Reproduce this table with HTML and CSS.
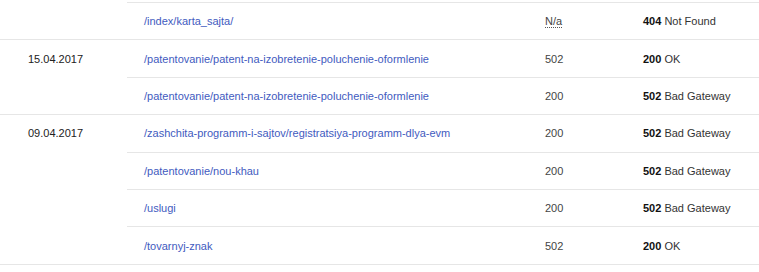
FILE: index.html
```html
<!DOCTYPE html>
<html>
<head>
<meta charset="utf-8">
<link rel="stylesheet" href="styles.css">
</head>
<body>
<div class="table">
  <div class="group first">
    <div class="date"></div>
    <div class="rows">
      <div class="row"><a class="url">/index/karta_sajta/</a><span class="code"><abbr class="na">N/a</abbr></span><span class="status"><b>404</b> Not Found</span></div>
    </div>
  </div>
  <div class="group">
    <div class="date">15.04.2017</div>
    <div class="rows">
      <div class="row"><a class="url">/patentovanie/patent-na-izobretenie-poluchenie-oformlenie</a><span class="code">502</span><span class="status"><b>200</b> OK</span></div>
      <div class="row"><a class="url">/patentovanie/patent-na-izobretenie-poluchenie-oformlenie</a><span class="code">200</span><span class="status"><b>502</b> Bad Gateway</span></div>
    </div>
  </div>
  <div class="group">
    <div class="date">09.04.2017</div>
    <div class="rows">
      <div class="row"><a class="url">/zashchita-programm-i-sajtov/registratsiya-programm-dlya-evm</a><span class="code">200</span><span class="status"><b>502</b> Bad Gateway</span></div>
      <div class="row"><a class="url">/patentovanie/nou-khau</a><span class="code">200</span><span class="status"><b>502</b> Bad Gateway</span></div>
      <div class="row"><a class="url">/uslugi</a><span class="code">200</span><span class="status"><b>502</b> Bad Gateway</span></div>
      <div class="row"><a class="url">/tovarnyj-znak</a><span class="code">502</span><span class="status"><b>200</b> OK</span></div>
    </div>
  </div>
</div>
</body>
</html>
```
FILE: styles.css
```css
html, body {
  margin: 0;
  padding: 0;
  background: #ffffff;
}
body {
  font-family: "Liberation Sans", Arial, sans-serif;
  font-size: 11px;
  color: #333333;
}
.table {
  margin-top: 2px;
  border-bottom: 1px solid #e6e6e6;
}
.group {
  display: flex;
  border-top: 1px solid #e6e6e6;
}
.group.first {
  border-top: none;
}
.date {
  flex: 0 0 127px;
  box-sizing: border-box;
  padding-left: 28px;
  height: 36.4px;
  display: flex;
  align-items: center;
  color: #222222;
}
.rows {
  flex: 1;
}
.row {
  display: grid;
  grid-template-columns: 401px 98px 1fr;
  align-items: center;
  height: 36.4px;
  border-top: 1px solid #e6e6e6;
}
.group .row:first-child {
  border-top: none;
}
.group.first .row:first-child {
  border-top: 1px solid #e6e6e6;
}
.url {
  padding-left: 17px;
  color: #3f5bc0;
  text-decoration: none;
  white-space: nowrap;
}
.code {
  padding-left: 17px;
  color: #444444;
}
.na {
  text-decoration: none;
  border-bottom: 1px dotted #555555;
}
.status {
  padding-left: 17px;
  color: #333333;
}
.status b {
  color: #111111;
}
```
